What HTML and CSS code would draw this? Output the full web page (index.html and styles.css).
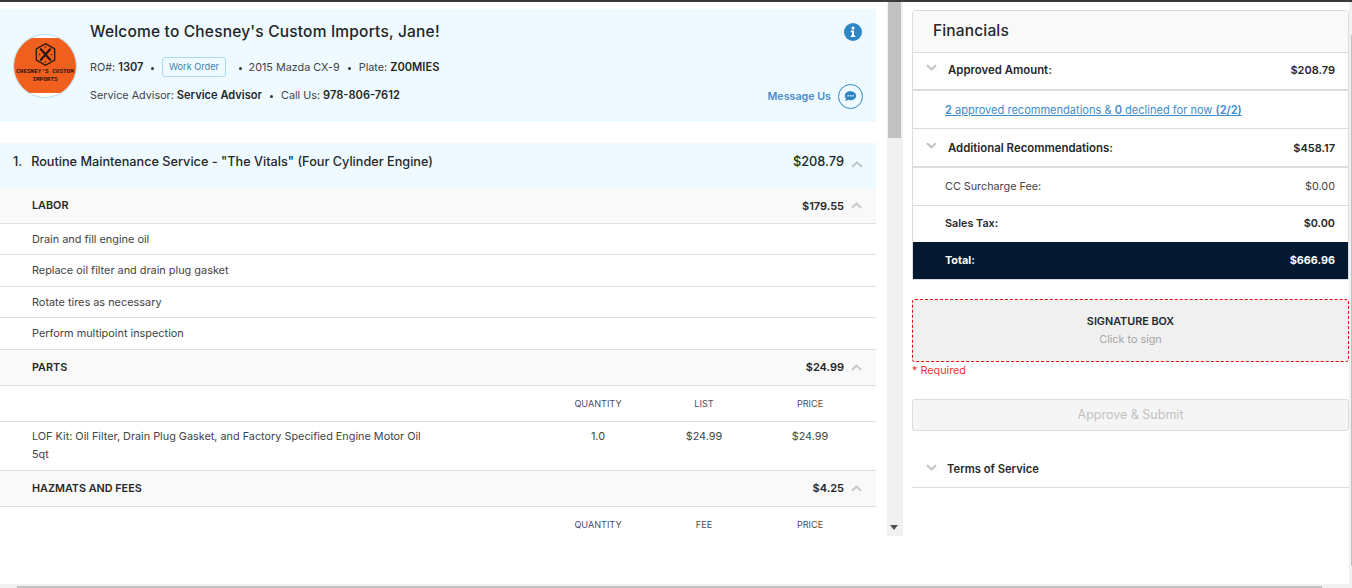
FILE: index.html
```html
<!DOCTYPE html>
<html lang="en">
<head>
<meta charset="utf-8">
<title>Chesney's Custom Imports</title>
<link rel="stylesheet" href="styles.css">
</head>
<body>
<div class="page">
  <div class="topline"></div>
  <div class="workspace">
    <section class="left-pane">
      <div class="left-content">
        <header class="welcome">
          <div class="logo">
            <div class="logo-disc">
              <svg class="logo-mark" viewBox="0 0 32 36" width="21" height="25">
                <path d="M16 1.500 30 9.500V26.500L16 34.500 2 26.500V9.500Z" fill="none" stroke="#2a1610" stroke-width="2"/>
                <path d="M9 10 23 26M23 10 9 26" stroke="#2a1610" stroke-width="3.400" stroke-linecap="round"/>
                <circle cx="16" cy="6.500" r="1.200" fill="#2a1610"/><circle cx="16" cy="29.500" r="1.200" fill="#2a1610"/><circle cx="7" cy="18" r="1.200" fill="#2a1610"/><circle cx="25" cy="18" r="1.200" fill="#2a1610"/>
              </svg>
              <div class="logo-text">CHESNEY'S CUSTOM</div>
              <div class="logo-text">IMPORTS</div>
            </div>
          </div>
          <div class="welcome-body">
            <div class="welcome-head">
              <h1>Welcome to Chesney's Custom Imports, Jane!</h1>
              <svg class="info" viewBox="0 0 18 18" width="18" height="18"><circle cx="9" cy="9" r="9" fill="#2f86c5"/><circle cx="9" cy="5" r="1.500" fill="#fff"/><path d="M6.800 7.600H10V12.400H11.200V14H6.800V12.400H8V9.200H6.800Z" fill="#fff"/></svg>
            </div>
            <div class="meta-row">
              <span>RO#: <b>1307</b></span><i class="dot"></i>
              <span class="badge">Work Order</span><i class="dot dot-wide"></i>
              <span>2015 Mazda CX-9</span><i class="dot"></i>
              <span>Plate: <b>Z00MIES</b></span>
            </div>
            <div class="meta-row meta-last">
              <div class="meta-left">
                <span>Service Advisor: <b>Service Advisor</b></span><i class="dot"></i>
                <span>Call Us: <b>978-806-7612</b></span>
              </div>
              <div class="message">
                <span>Message Us</span>
                <span class="msg-btn"><svg viewBox="0 0 16 16" width="13" height="13"><path d="M8 1.500C3.900 1.500 1 4 1 7.200c0 1.400.6 2.600 1.500 3.500-.2 1-.8 2-1.400 2.800 1.500 0 2.900-.6 3.900-1.400 1 .4 1.900.6 3 .6 4.100 0 7-2.500 7-5.500S12.100 1.500 8 1.500Z" fill="#2f86c5"/><circle cx="5" cy="7.200" r="1" fill="#fff"/><circle cx="8" cy="7.200" r="1" fill="#fff"/><circle cx="11" cy="7.200" r="1" fill="#fff"/></svg></span>
              </div>
            </div>
          </div>
        </header>

        <div class="service-row">
          <div class="service-name"><span class="num">1.</span>Routine Maintenance Service - "The Vitals" (Four Cylinder Engine)</div>
          <div class="service-price">$208.79<svg class="chev" viewBox="0 0 12 7" width="12" height="7"><path d="M1 6 6 1.500 11 6" fill="none" stroke="#c4c8ca" stroke-width="2.200"/></svg></div>
        </div>

        <div class="group-row"><span>LABOR</span><span class="group-price">$179.55<svg class="chev" viewBox="0 0 12 7" width="11" height="7"><path d="M1 6 6 1.500 11 6" fill="none" stroke="#c9c9c9" stroke-width="2.200"/></svg></span></div>
        <div class="line-row">Drain and fill engine oil</div>
        <div class="line-row">Replace oil filter and drain plug gasket</div>
        <div class="line-row">Rotate tires as necessary</div>
        <div class="line-row">Perform multipoint inspection</div>

        <div class="group-row"><span>PARTS</span><span class="group-price">$24.99<svg class="chev" viewBox="0 0 12 7" width="11" height="7"><path d="M1 6 6 1.500 11 6" fill="none" stroke="#c9c9c9" stroke-width="2.200"/></svg></span></div>
        <div class="table-head">
          <span class="col-q">QUANTITY</span><span class="col-l">LIST</span><span class="col-p">PRICE</span>
        </div>
        <div class="table-row">
          <div class="col-desc">LOF Kit: Oil Filter, Drain Plug Gasket, and Factory Specified Engine Motor Oil 5qt</div>
          <span class="col-q">1.0</span><span class="col-l">$24.99</span><span class="col-p">$24.99</span>
        </div>

        <div class="group-row"><span>HAZMATS AND FEES</span><span class="group-price">$4.25<svg class="chev" viewBox="0 0 12 7" width="11" height="7"><path d="M1 6 6 1.500 11 6" fill="none" stroke="#c9c9c9" stroke-width="2.200"/></svg></span></div>
        <div class="table-head table-head-open">
          <span class="col-q">QUANTITY</span><span class="col-l">FEE</span><span class="col-p">PRICE</span>
        </div>
      </div>
      <div class="v-scroll">
        <div class="v-thumb"></div>
        <svg class="v-arrow" viewBox="0 0 8 5" width="8" height="5"><path d="M0 0H8L4 5Z" fill="#505050"/></svg>
      </div>
    </section>

    <aside class="right-pane">
      <div class="fin-card">
        <h2>Financials</h2>
        <div class="fin-row fin-strong">
          <span class="fin-label"><svg viewBox="0 0 12 7" width="11" height="7"><path d="M1 1 6 5.500 11 1" fill="none" stroke="#c4c4c4" stroke-width="2.200"/></svg>Approved Amount:</span><span>$208.79</span>
        </div>
        <div class="fin-row fin-plain fin-link"><a href="#"><b>2</b> approved recommendations &amp; <b>0</b> declined for now <b>(2/2)</b></a></div>
        <div class="fin-row fin-strong fin-additional">
          <span class="fin-label"><svg viewBox="0 0 12 7" width="11" height="7"><path d="M1 1 6 5.500 11 1" fill="none" stroke="#c4c4c4" stroke-width="2.200"/></svg>Additional Recommendations:</span><span>$458.17</span>
        </div>
        <div class="fin-row fin-plain fin-cc"><span>CC Surcharge Fee:</span><span>$0.00</span></div>
        <div class="fin-row fin-plain fin-tax"><span>Sales Tax:</span><span>$0.00</span></div>
        <div class="fin-row fin-plain fin-total"><span>Total:</span><span>$666.96</span></div>
      </div>
      <div class="signature">
        <strong>SIGNATURE BOX</strong>
        <span>Click to sign</span>
      </div>
      <div class="required">* Required</div>
      <button class="submit" type="button" disabled>Approve &amp; Submit</button>
      <div class="terms"><svg viewBox="0 0 12 7" width="11" height="7"><path d="M1 1 6 5.500 11 1" fill="none" stroke="#c4c4c4" stroke-width="2.200"/></svg>Terms of Service</div>
    </aside>
    <div class="page-scroll"><div class="page-thumb"></div></div>
  </div>
  <div class="h-scroll"><div class="h-thumb"></div></div>
</div>
</body>
</html>
```
FILE: styles.css
```css
* { box-sizing: border-box; }
html, body { margin: 0; padding: 0; height: 100%; overflow: hidden; background: #fff; }
body { font-family: Inter, "Noto Sans", "Liberation Sans", sans-serif; font-size: 11px; color: #2b2b2b; }
.page { width: 1352px; height: 588px; display: flex; flex-direction: column; }
.topline { height: 2px; background: #3a3a3a; flex: none; }
.workspace { flex: 1; display: flex; min-height: 0; }
.left-pane { width: 903px; height: 534px; flex: none; display: flex; }
.left-content { width: 887px; padding-right: 11px; padding-top: 7px; flex: none; overflow: hidden; }
.v-scroll { width: 16px; background: #f1f1f1; position: relative; padding: 0 2px 0 1px; }
.v-thumb { height: 136px; background: #c1c1c1; }
.v-arrow { position: absolute; left: 3px; bottom: 6px; }
.welcome { height: 113px; background: #eefaff; display: flex; padding: 0 13px; margin-bottom: 21px; }
.logo { flex: none; width: 64px; height: 64px; margin-top: 25px; border-radius: 50%; border: 1px solid #b5def2; overflow: hidden; background: #fff; }
.logo-disc { height: 55px; margin-top: 3px; background: #f15f1e; display: flex; flex-direction: column; align-items: center; padding-top: 4px; }
.logo-mark { margin-bottom: 1px; }
.logo-text { font-family: "Liberation Mono", monospace; font-size: 6px; line-height: 8px; font-weight: 700; color: #2a1610; white-space: nowrap; }
.welcome-body { flex: 1; margin-left: 13px; min-width: 0; }
.welcome-head { display: flex; justify-content: space-between; align-items: center; height: 18px; margin-top: 14px; }
.welcome-head h1 { margin: 0; font-size: 15.500px; font-weight: 500; color: #1f2427; line-height: 20px; letter-spacing: .19px; }
.info { margin-right: 1px; }
.meta-row { display: flex; align-items: center; font-size: 10.800px; color: #3f4446; height: 20px; margin-top: 16px; white-space: nowrap; }
.meta-row b { font-weight: 600; font-size: 11.100px; color: #25282a; }
.meta-last { margin-top: 8px; justify-content: space-between; }
.meta-left { display: flex; align-items: center; }
.dot { width: 3px; height: 3px; background: #333; border-radius: 50%; margin: 2px 8px 0; flex: none; }
.dot-wide { margin-left: 13px; margin-right: 7px; }
.badge { border: 1px solid #aad8f2; border-radius: 3px; padding: 0 5.500px; font-size: 9.200px; line-height: 18px; height: 20px; color: #4a7fa8; }
.message { display: flex; align-items: center; color: #4a8ccb; font-weight: 600; font-size: 10.700px; gap: 7px; margin-top: 2px; }
.msg-btn { width: 25px; height: 25px; border: 1px solid #2f86c5; border-radius: 50%; display: flex; align-items: center; justify-content: center; }
.service-row { height: 45px; background: #eefaff; display: flex; justify-content: space-between; align-items: center; padding: 0 13px 8px; font-size: 12.700px; font-weight: 500; color: #23282b; }
.num { margin-right: 9px; }
.service-price { display: flex; align-items: center; font-size: 12.800px; }
.chev { margin-left: 7px; margin-top: 6px; }
.group-row { height: 36px; background: #f9f9f9; border-bottom: 1px solid #dedede; display: flex; align-items: center; justify-content: space-between; padding: 0 14px 0 32px; font-size: 10.800px; font-weight: 600; color: #25282a; }
.group-price { display: flex; align-items: center; font-size: 11px; }
.group-price .chev { margin-top: 0; }
.line-row { height: 31.400px; border-bottom: 1px solid #dedede; padding: 0 0 .7px 32px; display: flex; align-items: center; color: #3f4446; font-size: 10.900px; }
.table-head { height: 36px; border-bottom: 1px solid #dedede; display: flex; align-items: center; justify-content: flex-end; font-size: 9.100px; color: #4a4f52; padding-right: 13px; }
.table-head-open { border-bottom: none; padding-bottom: 1px; }
.col-q, .col-l, .col-p { width: 106px; text-align: center; flex: none; }
.table-row { height: 49px; border-bottom: 1px solid #dedede; display: flex; padding: 5px 13px 0 32px; font-size: 10.850px; line-height: 18px; color: #3f4446; }
.col-desc { width: 392px; margin-right: auto; flex: none; }
.right-pane { flex: none; width: 437px; margin-left: 9px; padding-top: 8px; display: flex; flex-direction: column; }
.fin-card { border: 1px solid #dcdcdc; border-radius: 4px 4px 0 0; overflow: hidden; }
.fin-card h2 { margin: 0; height: 42px; background: #f9f9f9; border-bottom: 1px solid #dcdcdc; font-size: 15.500px; letter-spacing: .15px; font-weight: 500; color: #23282b; line-height: 40px; padding-left: 20px; }
.fin-row { display: flex; justify-content: space-between; align-items: center; padding: 0 13px 0 32px; font-size: 10.800px; color: #3f4446; height: 38px; border-bottom: 1px solid #dcdcdc; }
.fin-strong { font-weight: 600; font-size: 11px; color: #25282a; padding-left: 13px; padding-bottom: 2px; height: 38px; border-bottom-width: 2px; }
.fin-additional { height: 39px; padding-bottom: 0; }
.fin-label { display: flex; align-items: center; font-size: 11.400px; }
.fin-label svg { margin-right: 11px; margin-top: -5px; }
.fin-link a { color: #3f8ccc; text-decoration: underline; font-size: 11.050px; }
.fin-link b { font-weight: 600; }
.fin-tax { font-weight: 600; color: #25282a; border-bottom: none; height: 36px; padding-bottom: 1px; }
.fin-total { background: #04192f; color: #fff; font-weight: 700; border-bottom: none; height: 37px; }
.signature { margin-top: 19px; height: 63px; background: #f0f0f0; border: 1px dashed #e10d0d; border-radius: 3px; display: flex; flex-direction: column; align-items: center; justify-content: center; gap: 5px; }
.signature strong { font-size: 10.800px; font-weight: 600; color: #25282a; line-height: 13px; }
.signature span { font-size: 10.800px; color: #a6a6a6; line-height: 13px; }
.required { font-size: 10.800px; color: #ef3434; margin-top: 2px; line-height: 14px; }
.submit { margin-top: 21px; height: 32px; background: #f5f5f5; border: 1px solid #dcdcdc; border-radius: 3px; font-family: inherit; font-size: 12.500px; line-height: 14px; padding: 0 0 1px; color: #c2c2c2; }
.terms { margin-top: 19px; height: 38px; border-bottom: 1px solid #dcdcdc; display: flex; align-items: center; padding-left: 14px; font-size: 11.200px; font-weight: 600; color: #25282a; }
.terms svg { margin-right: 10px; margin-top: -3px; }
.page-scroll { width: 3px; background: #f1f1f1; padding-left: 2px; }
.page-thumb { margin-top: 33px; height: 531px; background: #c1c1c1; }
.h-scroll { flex: none; height: 4px; background: #f1f1f1; padding: 2px 0 0 17px; }
.h-thumb { height: 2px; width: 1305px; background: #c1c1c1; }
```
